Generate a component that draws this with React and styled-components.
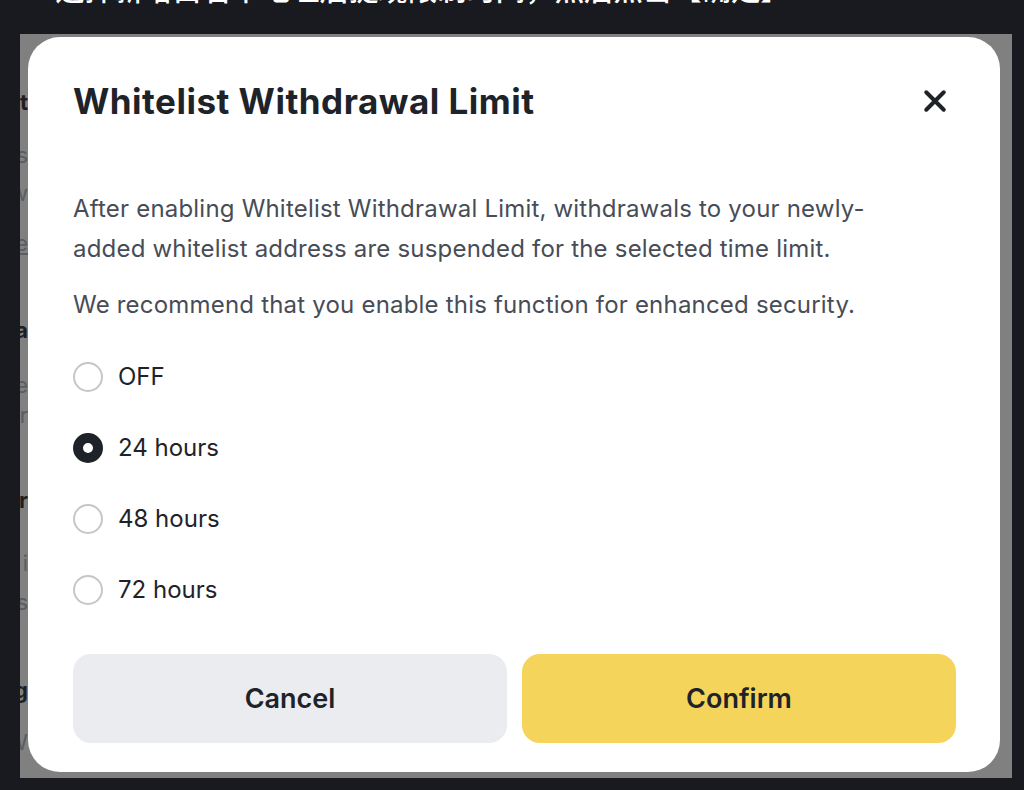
import React, { useState } from 'react'
import styled, { createGlobalStyle, css } from 'styled-components'

const GlobalStyle = createGlobalStyle`
  html, body {
    margin: 0;
    padding: 0;
    background: #181a20;
  }
  body {
    font-family: Inter, "Noto Sans", "Liberation Sans", sans-serif;
    -webkit-font-smoothing: antialiased;
  }
  * {
    box-sizing: border-box;
  }
`

const options = [
  { id: 'off', label: 'OFF' },
  { id: '24', label: '24 hours' },
  { id: '48', label: '48 hours' },
  { id: '72', label: '72 hours' },
]

// letters of the page behind the overlay, peeking out at the left edge
const backLines = [
  { text: 't', dark: true, top: 53 },
  { text: 'is', top: 29 },
  { text: 'w', top: 14 },
  { text: 'e', top: 26, underline: true },
  { text: 'a', dark: true, top: 63 },
  { text: 'te', top: 31 },
  { text: 'r', top: 6 },
  { text: 'r', dark: true, top: 61 },
  { text: 'i', top: 39 },
  { text: 's', top: 15 },
  { text: 'g', dark: true, top: 64 },
  { text: 'W', top: 28 },
]

const App = () => {
  const [value, setValue] = useState('24')

  return (
    <>
      <GlobalStyle />
      <Screen>
        <Caption>
          <CaptionText>选择新增白名单地址后提现限制时间，然后点击【确定】</CaptionText>
        </Caption>
        <Backdrop>
          <BackPage>
            {backLines.map((line, i) => (
              <BackLine
                key={i}
                $dark={line.dark}
                $underline={line.underline}
                style={{ marginTop: line.top }}
              >
                {line.text}
              </BackLine>
            ))}
          </BackPage>
          <Modal>
            <Header>
              <Title>Whitelist Withdrawal Limit</Title>
              <CloseButton aria-label="Close">
                <svg width="30" height="30" viewBox="0 0 24 24" fill="none">
                  <path
                    d="M5 5L19 19M19 5L5 19"
                    stroke="#1e2329"
                    strokeWidth="3.2"
                    strokeLinecap="round"
                  />
                </svg>
              </CloseButton>
            </Header>
            <Description>
              After enabling Whitelist Withdrawal Limit, withdrawals to your newly-
              <br />
              added whitelist address are suspended for the selected time limit.
            </Description>
            <Note>
              We recommend that you enable this function for enhanced security.
            </Note>
            <OptionList>
              {options.map((opt) => (
                <Option key={opt.id} onClick={() => setValue(opt.id)}>
                  <Radio $checked={value === opt.id} />
                  <OptionLabel>{opt.label}</OptionLabel>
                </Option>
              ))}
            </OptionList>
            <Actions>
              <ActionButton>Cancel</ActionButton>
              <ActionButton $primary>Confirm</ActionButton>
            </Actions>
          </Modal>
        </Backdrop>
      </Screen>
    </>
  )
}

const Screen = styled.div`
  width: 1024px;
  height: 790px;
  overflow: hidden;
  display: flex;
  flex-direction: column;
`

const Caption = styled.div`
  height: 34px;
  flex-shrink: 0;
  overflow: hidden;
  padding-left: 55px;
`

const CaptionText = styled.div`
  margin-top: -29px;
  font-family: "Noto Sans CJK SC", sans-serif;
  font-size: 29.4px;
  line-height: 32px;
  font-weight: 500;
  color: #ffffff;
  white-space: nowrap;
`

const Backdrop = styled.div`
  margin: 0 12px 0 20px;
  height: 744px;
  flex-shrink: 0;
  background: #808080;
  display: flex;
  padding: 3px 12px 6px 0;
  overflow: hidden;
`

const BackPage = styled.div`
  width: 8px;
  flex-shrink: 0;
  display: flex;
  flex-direction: column;
  align-items: flex-end;
  overflow: hidden;
`

const BackLine = styled.span`
  font-size: 22px;
  line-height: 24px;
  color: ${(p) => (p.$dark ? '#1e1f22' : '#5b5c5f')};
  font-weight: ${(p) => (p.$dark ? 700 : 400)};
  white-space: nowrap;
  ${(p) =>
    p.$underline &&
    css`
      text-decoration: underline;
    `}
`

const Modal = styled.div`
  flex: 1;
  background: #ffffff;
  border-radius: 32px;
  padding: 44px 44px 0 45px;
  display: flex;
  flex-direction: column;
`

const Header = styled.div`
  display: flex;
  align-items: center;
  justify-content: space-between;
  height: 40px;
  margin-bottom: 68px;
`

const Title = styled.h1`
  margin: 0;
  font-size: 35px;
  font-weight: 700;
  color: #1e2329;
  letter-spacing: 0.5px;
`

const CloseButton = styled.button`
  border: 0;
  background: none;
  padding: 0;
  margin-right: 6px;
  display: flex;
  cursor: pointer;
`

const Description = styled.p`
  margin: 0;
  font-size: 24px;
  line-height: 40px;
  letter-spacing: 0.2px;
  color: #474d57;
`

const Note = styled(Description)`
  margin-top: 16px;
`

const OptionList = styled.div`
  display: flex;
  flex-direction: column;
  margin-top: 16px;
`

const Option = styled.label`
  display: flex;
  align-items: center;
  gap: 15px;
  height: 71px;
  cursor: pointer;
`

const Radio = styled.span`
  width: 30px;
  height: 30px;
  border-radius: 50%;
  flex-shrink: 0;
  ${(p) =>
    p.$checked
      ? css`
          border: 10px solid #1e2329;
        `
      : css`
          border: 2px solid #c4c6ca;
        `}
`

const OptionLabel = styled.span`
  font-size: 24px;
  color: #1e2329;
`

const Actions = styled.div`
  display: flex;
  gap: 15px;
  margin-top: 29px;
`

const ActionButton = styled.button`
  flex: 1;
  height: 89px;
  border: 0;
  border-radius: 18px;
  font-family: inherit;
  font-size: 27px;
  font-weight: 600;
  color: #1e2329;
  background: ${(p) => (p.$primary ? '#f4d45b' : '#eaecef')};
  cursor: pointer;
`

export default App
